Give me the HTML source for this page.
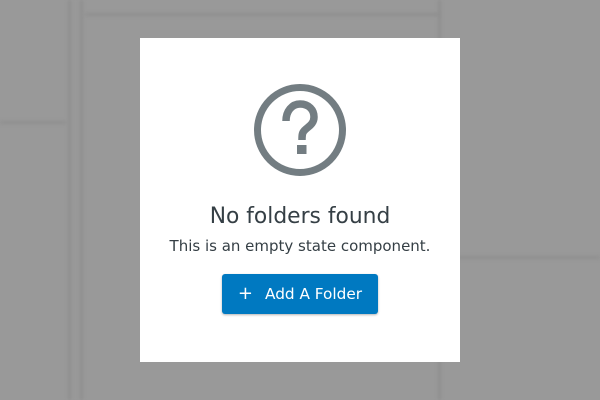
<!DOCTYPE html>
<html><head><style>
html,body{margin:0;padding:0;width:600px;height:400px;overflow:hidden;background:#999;font-family:"DejaVu Sans","Liberation Sans",sans-serif}
.l{position:absolute;background:#8f8f8f;filter:blur(1.5px)}
.panel{position:absolute;left:140px;top:38px;width:320px;height:324px;background:#fff}
h1{position:absolute;left:0;width:320px;top:166px;margin:0;text-align:center;font-size:21.8px;font-weight:normal;color:#353f45}
p{position:absolute;left:0;width:320px;top:199px;margin:0;text-align:center;font-size:15px;color:#353f45}
.btn{position:absolute;left:82px;top:236px;width:156px;height:40px;background:#0079c1;border-radius:3px;box-shadow:0 1px 2px rgba(0,0,0,.3);color:#fff;font-size:15.3px;line-height:40px;text-align:center}
</style></head><body>
<div class="l" style="left:0;top:121px;width:66px;height:3px"></div>
<div class="l" style="left:68px;top:0;width:3px;height:400px"></div>
<div class="l" style="left:80px;top:0;width:3px;height:400px"></div>
<div class="l" style="left:85px;top:13px;width:355px;height:3px"></div>
<div class="l" style="left:438px;top:0;width:3px;height:400px"></div>
<div class="l" style="left:455px;top:256px;width:145px;height:3px"></div>
<div class="panel">
<svg style="position:absolute;left:112px;top:44px" width="96" height="96" viewBox="0 0 96 96">
<circle cx="48" cy="48" r="42.5" fill="none" stroke="#737d82" stroke-width="7"/>
<path d="M34 39 C34 29 40 22 48 22 C57 22 62 28 62 35 C62 43 55 45 52 49 C50 51 50 54 50 58" fill="none" stroke="#737d82" stroke-width="7.5"/>
<rect x="45" y="63" width="9.5" height="9" fill="#737d82"/>
</svg>
<h1>No folders found</h1>
<p>This is an empty state component.</p>
<div class="btn"><span style="font-size:18px;margin-right:12px">+</span>Add A Folder</div>
</div>
</body></html>
